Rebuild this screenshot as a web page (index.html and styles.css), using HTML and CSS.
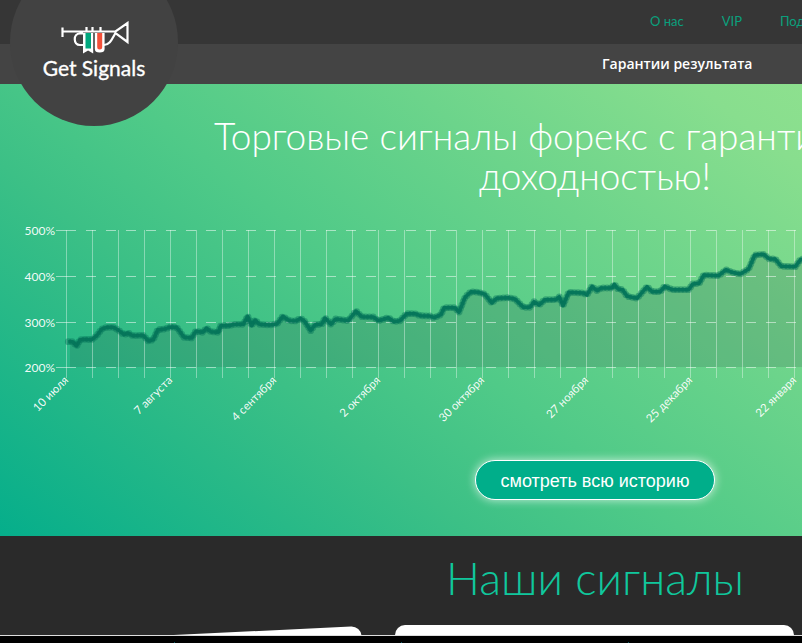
FILE: index.html
```html
<!DOCTYPE html>
<html lang="ru">
<head>
<meta charset="utf-8">
<title>Get Signals</title>
<link rel="stylesheet" href="styles.css">
</head>
<body>
<div class="page">
  <header class="header">
    <div class="topbar">
      <nav class="topnav"><a>О нас</a><a>VIP</a><a>Подписка</a></nav>
    </div>
    <div class="subbar">
      <nav class="subnav"><a>Гарантии результата</a></nav>
    </div>
    <div class="logo">
      <svg class="logo-mark" width="70" height="36" viewBox="0 0 70 36">
        <path class="tube" d="M2.500 6.500V16M2.500 10.500H55.500L67.500 2V21L55.500 12C52 18 50 24 44 24M23 12.500H20C13 12.500 13 24 20 24H23"/>
        <path class="tube" d="M26.500 6V10.500M32.500 6V10.500M40.500 6V10.500"/>
        <path class="mark" d="M23 12H33.200V32.500L28.100 29.500L23 32.500Z"/>
        <path class="mark" d="M34.800 12H44.600V28Q44.600 31.500 39.700 31.500Q34.800 31.500 34.800 28Z"/>
        <rect class="green" x="25.500" y="12" width="5.500" height="15.500"/>
        <path class="red" d="M37.200 12H42.200V26Q42.200 28.500 39.700 28.500Q37.200 28.500 37.200 26Z"/>
      </svg>
      <div class="logo-text">Get Signals</div>
    </div>
  </header>
  <section class="hero">
    <h1 class="title">Торговые сигналы форекс с гарантированной<br>доходностью!</h1>
    <svg class="chart" width="1190" height="230" viewBox="0 215 1190 230">
      <path id="chart-area" class="area"/>
      <path class="grid-h" d="M66 231.500H830M66 277.500H830M66 323.500H830M66 368.500H830"/>
      <path class="ticks" d="M56 231.500H66M56 277.500H66M56 323.500H66M56 368.500H66"/>
      <path class="grid-v" d="M66.500 231V379M92.500 231V379M118.500 231V379M144.500 231V379M170.500 231V379M196.500 231V379M222.500 231V379M248.500 231V379M274.500 231V379M300.500 231V379M326.500 231V379M352.500 231V379M378.500 231V379M404.500 231V379M430.500 231V379M456.500 231V379M482.500 231V379M508.500 231V379M534.500 231V379M560.500 231V379M586.500 231V379M612.500 231V379M638.500 231V379M664.500 231V379M690.500 231V379M716.500 231V379M742.500 231V379M768.500 231V379M794.500 231V379"/>
      <path id="chart-line" class="line"/>
      <g id="chart-dots" class="dots"></g>
      <g class="y-labels">
        <text x="55" y="235.500">500%</text>
        <text x="55" y="281.500">400%</text>
        <text x="55" y="327.500">300%</text>
        <text x="55" y="372.500">200%</text>
      </g>
      <g class="x-labels">
        <text transform="translate(69 382) rotate(-45)">10 июля</text>
        <text transform="translate(173 382) rotate(-45)">7 августа</text>
        <text transform="translate(277 382) rotate(-45)">4 сентября</text>
        <text transform="translate(381 382) rotate(-45)">2 октября</text>
        <text transform="translate(485 382) rotate(-45)">30 октября</text>
        <text transform="translate(589 382) rotate(-45)">27 ноября</text>
        <text transform="translate(693 382) rotate(-45)">25 декабря</text>
        <text transform="translate(797 382) rotate(-45)">22 января</text>
      </g>
    </svg>
    <a class="history-btn">смотреть всю историю</a>
  </section>
  <section class="signals">
    <h2 class="signals-title">Наши сигналы</h2>
    <div class="cards">
      <div class="card card-tilted"></div>
      <div class="card card-flat"></div>
    </div>
  </section>
</div>
<div class="strip"><span></span><span></span><span></span></div>
<script src="chart.js"></script>
</body>
</html>
```
FILE: styles.css
```css
html, body {
  margin: 0;
  padding: 0;
  height: 643px;
  overflow: hidden;
  background: #000;
}
body {
  font-family: "Lato", "Noto Sans", sans-serif;
}
.page {
  width: 1190px;
  height: 635px;
  overflow: hidden;
  position: relative;
}
.header {
  position: relative;
}
.topbar {
  height: 44px;
  background: #363636;
  display: flex;
  align-items: center;
}
.topnav {
  margin: -2px 0 0 650px;
  display: flex;
  gap: 38px;
  font-size: 13px;
  color: #0aa07d;
}
.subbar {
  height: 40px;
  background: #444;
  display: flex;
  align-items: center;
}
.subnav {
  margin: -1px 0 0 602px;
  font-family: "Open Sans", sans-serif;
  font-size: 14px;
  font-weight: 600;
  color: #fff;
}
.logo {
  position: absolute;
  left: 10px;
  top: -42px;
  width: 168px;
  height: 168px;
  border-radius: 50%;
  background: #424242;
  display: flex;
  flex-direction: column;
  align-items: center;
  padding-top: 63px;
  box-sizing: border-box;
  z-index: 2;
}
.logo-mark {
  display: block;
  margin-left: 1px;
}
.tube {
  fill: none;
  stroke: #fff;
  stroke-width: 2.200;
}
.mark {
  fill: #fff;
}
.green {
  fill: #00a87e;
}
.red {
  fill: #f4513a;
}
.logo-text {
  font-size: 21px;
  font-weight: 400;
  -webkit-text-stroke: .35px #fff;
  color: #fff;
  line-height: 24px;
  margin-top: -1px;
}
.hero {
  height: 452px;
  background: linear-gradient(38deg, #05ae8b 0%, #28b987 17%, #3cc086 27%, #50ca88 39%, #88de8e 72%, #a0e890 100%);
  display: flex;
  flex-direction: column;
  align-items: center;
}
.title {
  margin: 32px 0 0;
  font-size: 37px;
  line-height: 40px;
  font-weight: 300;
  color: #fff;
  text-align: center;
}
.chart {
  display: block;
  margin-top: 18px;
  flex: none;
}
.area {
  fill: rgba(50, 80, 70, .18);
}
.grid-h {
  fill: none;
  stroke: rgba(255,255,255,.5);
  stroke-width: 1;
  stroke-dasharray: 10 10;
}
.ticks {
  fill: none;
  stroke: rgba(255,255,255,.5);
}
.grid-v {
  fill: none;
  stroke: rgba(255,255,255,.38);
  stroke-width: 1;
}
.line {
  fill: none;
  stroke: #0b7d60;
  stroke-width: 3.500;
  stroke-linejoin: round;
}
.dots circle {
  fill: rgba(5, 115, 88, .45);
}
.y-labels text {
  font-size: 12px;
  fill: rgba(255,255,255,.95);
  text-anchor: end;
}
.x-labels text {
  font-size: 11.500px;
  fill: rgba(255,255,255,.95);
  text-anchor: end;
}
.history-btn {
  width: 240px;
  height: 40px;
  margin-top: 16px;
  box-sizing: border-box;
  flex: none;
  border: 1px solid #fff;
  border-radius: 20px;
  background: #00ae8a;
  box-shadow: 0 0 10px rgba(255,255,255,.7);
  font-family: "Liberation Sans", sans-serif;
  font-size: 18px;
  line-height: 40px;
  color: #fff;
  text-align: center;
}
.signals {
  height: 99px;
  background: #2a2a2a;
  overflow: hidden;
}
.signals-title {
  margin: 12px 0 0;
  font-size: 45px;
  line-height: 60px;
  font-weight: 300;
  color: #10c79c;
  text-align: center;
}
.cards {
  display: flex;
  margin: 17px 0 0 20px;
  gap: 34px;
}
.card {
  width: 399px;
  height: 100px;
  background: #fff;
  border-radius: 10px;
  flex: none;
}
.card-tilted {
  width: 341px;
  transform-origin: right top;
  transform: translateY(1px) rotate(-2.750deg);
}
.strip {
  height: 8px;
  box-sizing: border-box;
  border-top: 1px solid #ddd;
  background: #000;
  display: flex;
  align-items: flex-end;
  padding-left: 174px;
  gap: 226px;
}
.strip span {
  width: 1px;
  height: 1px;
  background: #0b5a66;
}
```
FILE: chart.js
```js
var points = [
  [68.3,342.7],[72.7,342.7],[76.7,347],[80,340.7],[85,340.3],[91.7,340.7],[96.7,336.7],[101.7,330],
  [106.7,328.3],[113.3,328.3],[118.3,331],[124,335.7],[128.3,334],[132.7,336.7],[143.3,336.3],[148.3,342],
  [153.3,340.7],[157.7,330.7],[165,330],[170,328],[176.7,328.3],[184,338.3],[191.7,339],[195.7,332.3],
  [202.7,333.3],[206.7,329],[210.7,332.7],[218.3,333.3],[220.7,326.7],[230,326.7],[233.3,325.3],[243.3,325.3],
  [247.7,317.3],[251.7,326.7],[255,321],[259.3,325.3],[270,326],[277.3,324.7],[282.7,317.3],[289.3,321.7],
  [296,322],[300.7,319.3],[305,322.7],[310.7,331.7],[315,325.7],[321.7,325.3],[325,319],[331,325.3],
  [335.7,320],[348.3,321.7],[356,312],[361.7,317.7],[373.3,318],[378.3,321.7],[388.3,318.7],[394,322.7],
  [400,321.7],[406.7,314.7],[415,314.7],[420,316.7],[430,317],[434,318.7],[441,315.7],[444,308.7],
  [455,308.7],[459,313.3],[465,298.3],[471,292.7],[478.3,293.3],[485,295.3],[491.7,304],[496.7,299.3],
  [508.3,298.7],[515,300],[523.3,308.3],[530,308.3],[534,302.7],[539.3,306],[544.7,300.7],[556,300.7],
  [559.3,297.7],[563,306.7],[568.7,293.3],[583.7,294],[587,296],[592,287.3],[597,291.7],[601,289],
  [612,289],[614.3,285.3],[618,290],[622.7,290.7],[627,297.3],[637,299.3],[647,287.7],[652,292.7],
  [660.3,292.7],[664.7,287.3],[672,290.7],[688.7,290.7],[692.7,285],[699.3,284.3],[703.7,276],[718.7,276.7],
  [726,270.7],[732,273.3],[740.3,275],[748.7,270],[754.7,256],[763.7,255.3],[769.3,260],[775.3,260],
  [781.3,267.3],[795.3,267.7],[800.3,260.7],[812,258]
];
var SVG_NS = "http://www.w3.org/2000/svg";
var d = points.map(function (p) { return p.join(" "); }).join(" L");
var line = document.getElementById("chart-line");
line.setAttribute("d", "M" + d);
document.getElementById("chart-area").setAttribute("d", "M70 368 V342.7 L" + d + " V368 Z");
var dots = document.getElementById("chart-dots");
var length = line.getTotalLength();
for (var s = 0; s < length; s += 3.71) {
  var pt = line.getPointAtLength(s);
  var c = document.createElementNS(SVG_NS, "circle");
  c.setAttribute("cx", pt.x);
  c.setAttribute("cy", pt.y);
  c.setAttribute("r", 3.4);
  dots.appendChild(c);
}
```
